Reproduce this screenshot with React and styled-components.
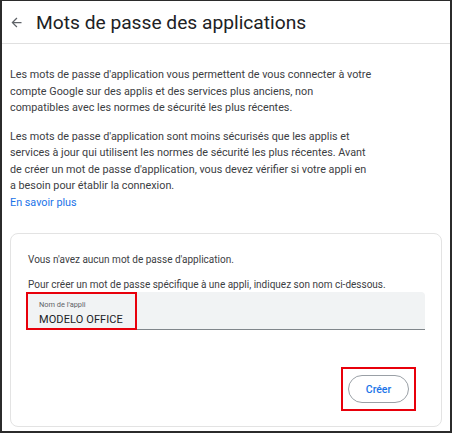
import React from "react";
import styled, { createGlobalStyle } from "styled-components";

const Global = createGlobalStyle`
  html, body { margin: 0; padding: 0; background: #fff; }
  * { box-sizing: border-box; }
`;

const Frame = styled.div`
  width: 452px;
  height: 433px;
  border: 2px solid #2b2b2b;
  border-top-width: 1px;
  background: #fff;
  font-family: Roboto, "Liberation Sans", sans-serif;
  color: #3c4043;
  display: flex;
  flex-direction: column;
  overflow: hidden;
`;

const Header = styled.div`
  display: flex;
  align-items: center;
  gap: 12px;
  height: 43px;
  padding: 0 0 0 7px;
  border-bottom: 1px solid #e0e0e0;
`;

const BackButton = styled.span`
  display: flex;
  width: 15px;
  height: 15px;
  color: #5f6368;
`;

const Title = styled.h1`
  margin: 0;
  font-family: Roboto, "Open Sans", sans-serif;
  font-weight: 400;
  font-size: 19.2px;
  color: #202124;
  letter-spacing: 0;
`;

const Body = styled.div`
  padding: 23px 8px 0 8px;
  display: flex;
  flex-direction: column;
`;

const Para = styled.p`
  margin: 0 0 ${(p) => p.$mb || 0}px 0;
  font-size: 10.8px;
  line-height: 16.5px;
  color: #3c4043;
  white-space: nowrap;
`;

const Link = styled.a`
  font-size: 10.8px;
  line-height: 16.5px;
  color: #1a73e8;
  text-decoration: none;
`;

const Card = styled.div`
  margin-top: 22px;
  height: 194px;
  border: 1px solid #e3e3e3;
  border-radius: 8px;
  padding: 18px 16px 0 17px;
  display: flex;
  flex-direction: column;
`;

const CardText = styled.p`
  margin: 0 0 ${(p) => p.$mb || 0}px 0;
  font-size: 10px;
  line-height: 15px;
  color: #3c4043;
  white-space: nowrap;
`;

const Field = styled.div`
  position: relative;
  height: 38px;
  background: #f1f3f4;
  border-bottom: 1px solid #80868b;
  border-radius: 4px 4px 0 0;
  padding: 8px 11px 0 11px;
  display: flex;
  flex-direction: column;
`;

const FieldLabel = styled.span`
  font-size: 7.4px;
  line-height: 9px;
  color: #5f6368;
`;

const FieldValue = styled.span`
  margin-top: 4px;
  font-size: 11px;
  line-height: 14px;
  color: #202124;
  letter-spacing: 0.1px;
`;

const Highlight = styled.div`
  position: absolute;
  border: 2px solid #e8000b;
  left: ${(p) => p.$l}px;
  top: ${(p) => p.$t}px;
  width: ${(p) => p.$w}px;
  height: ${(p) => p.$h}px;
  pointer-events: none;
`;

const Actions = styled.div`
  margin-top: 45px;
  display: flex;
  justify-content: flex-end;
  padding-right: 16px;
`;

const ButtonWrap = styled.div`
  position: relative;
`;

const PillButton = styled.button`
  width: 61px;
  height: 28px;
  border: 1px solid #9aa0a6;
  border-radius: 14px;
  background: #fff;
  color: #1a73e8;
  font-family: Roboto, "Liberation Sans", sans-serif;
  font-weight: 500;
  font-size: 10.5px;
  cursor: pointer;
  padding: 0;
`;

export default function App() {
  return (
    <>
      <Global />
      <Frame>
        <Header>
          <BackButton>
            <svg viewBox="0 0 24 24" width="15" height="15" fill="currentColor">
              <path d="M20 11H7.83l5.59-5.59L12 4l-8 8 8 8 1.41-1.41L7.83 13H20v-2z" />
            </svg>
          </BackButton>
          <Title>Mots de passe des applications</Title>
        </Header>
        <Body>
          <Para $mb={12}>
            Les mots de passe d'application vous permettent de vous connecter à votre
            <br />
            compte Google sur des applis et des services plus anciens, non
            <br />
            compatibles avec les normes de sécurité les plus récentes.
          </Para>
          <Para>
            Les mots de passe d'application sont moins sécurisés que les applis et
            <br />
            services à jour qui utilisent les normes de sécurité les plus récentes. Avant
            <br />
            de créer un mot de passe d'application, vous devez vérifier si votre appli en
            <br />
            a besoin pour établir la connexion.
          </Para>
          <Link href="#">En savoir plus</Link>
          <Card>
            <CardText $mb={10}>Vous n'avez aucun mot de passe d'application.</CardText>
            <CardText>
              Pour créer un mot de passe spécifique à une appli, indiquez son nom ci-dessous.
            </CardText>
            <Field>
              <FieldLabel>Nom de l'appli</FieldLabel>
              <FieldValue>MODELO OFFICE</FieldValue>
              <Highlight $l={-2} $t={0} $w={111} $h={38} />
            </Field>
            <Actions>
              <ButtonWrap>
                <PillButton>Créer</PillButton>
                <Highlight $l={-7} $t={-8} $w={75} $h={44} />
              </ButtonWrap>
            </Actions>
          </Card>
        </Body>
      </Frame>
    </>
  );
}
